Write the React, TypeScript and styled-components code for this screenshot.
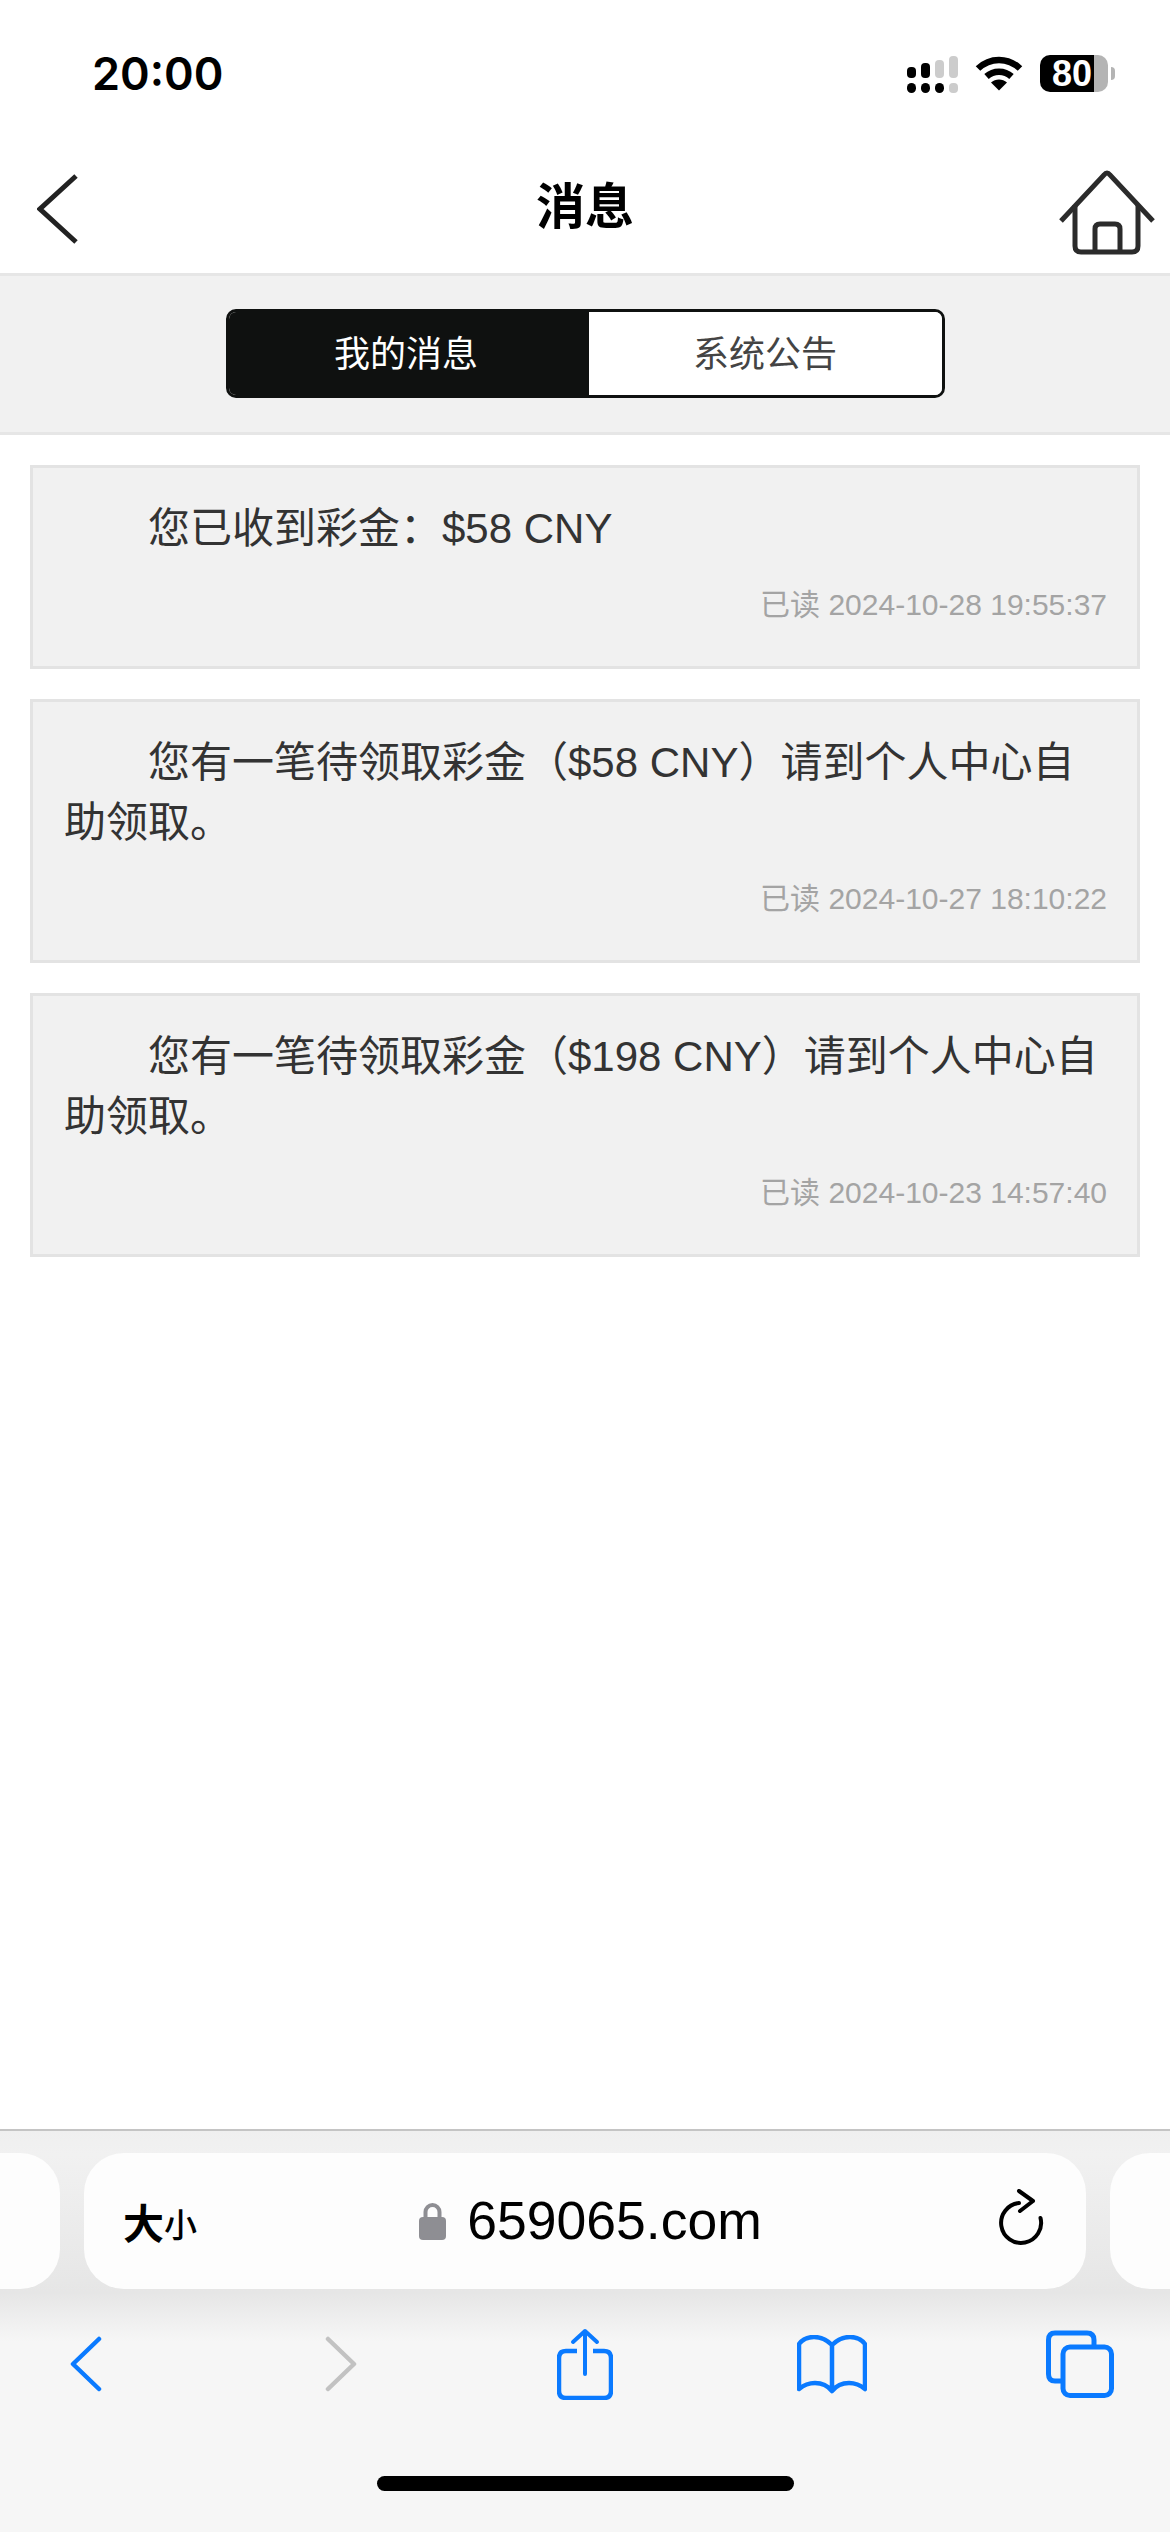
import React from "react";
import styled, { createGlobalStyle } from "styled-components";

const GlobalStyle = createGlobalStyle`
  html, body {
    margin: 0;
    padding: 0;
    background: #fff;
  }
  body {
    font-family: "Liberation Sans", "Noto Sans CJK SC", sans-serif;
  }
  * {
    box-sizing: border-box;
  }
`;

const Screen = styled.div`
  width: 1170px;
  height: 2532px;
  display: flex;
  flex-direction: column;
  overflow: hidden;
  background: #fff;
`;

const StatusBar = styled.div`
  height: 110px;
  flex: none;
  display: flex;
  align-items: flex-start;
  justify-content: space-between;
  padding: 50px 55px 0 92px;
`;

const Clock = styled.div`
  font-family: Inter, "Liberation Sans", sans-serif;
  font-size: 45px;
  line-height: 48px;
  font-weight: 600;
  color: #000;
`;

const StatusIcons = styled.div`
  display: flex;
  align-items: flex-start;
  margin-top: 5px;
`;

const SignalIcon = styled.svg`
  width: 51px;
  height: 37px;
  margin-top: 1px;
`;

const WifiIcon = styled.svg`
  width: 48px;
  height: 36px;
  margin-left: 17px;
`;

const Battery = styled.div`
  width: 68px;
  height: 37px;
  margin-left: 17px;
  border-radius: 10px;
  background: linear-gradient(90deg, #000 0 54px, #b4b4b4 54px);
  color: #fff;
  font-size: 36px;
  font-weight: 700;
  line-height: 37px;
  padding-left: 12px;
`;

const BatteryNub = styled.div`
  width: 4px;
  height: 13px;
  margin: 12px 0 0 3px;
  border-radius: 0 4px 4px 0;
  background: #b4b4b4;
`;

const NavBar = styled.div`
  height: 166px;
  flex: none;
  display: grid;
  grid-template-columns: 1fr auto 1fr;
  align-items: center;
  padding: 32px 15px 0;
  border-bottom: 3px solid #e6e6e6;
`;

const Title = styled.div`
  font-size: 49px;
  line-height: 60px;
  font-weight: 700;
  color: #000;
  margin-top: -2px;
`;

const BackIcon = styled.svg`
  width: 42px;
  height: 72px;
  margin: 2px 0 0 22px;
`;

const HomeIcon = styled.svg`
  width: 96px;
  height: 86px;
  justify-self: end;
  margin-top: 8px;
`;

const TabBand = styled.div`
  height: 159px;
  flex: none;
  display: flex;
  justify-content: center;
  align-items: flex-start;
  padding-top: 33px;
  background: #f1f1f1;
  border-bottom: 3px solid #e6e6e6;
`;

const Segment = styled.div`
  width: 719px;
  height: 89px;
  display: grid;
  grid-template-columns: 360px 1fr;
  border: 3px solid #0f1110;
  border-radius: 10px;
  overflow: hidden;
  background: #fff;
`;

const SegmentItem = styled.div<{ $active?: boolean }>`
  display: flex;
  align-items: center;
  justify-content: center;
  font-size: 36px;
  padding: ${(p) => (p.$active ? "0 5px 5px 0" : "0 0 5px")};
  background: ${(p) => (p.$active ? "#0f1110" : "#fff")};
  color: ${(p) => (p.$active ? "#fff" : "#444")};
`;

const MessageList = styled.div`
  flex: 1;
  display: flex;
  flex-direction: column;
  gap: 30px;
  padding: 30px 30px 0;
`;

const Card = styled.div`
  background: #f1f1f1;
  border: 3px solid #e3e3e3;
  padding: 31px 30px 41px 31px;
`;

const CardText = styled.div`
  font-size: 42px;
  line-height: 60px;
  text-indent: 84px;
  color: #333;
`;

const CardMeta = styled.div`
  margin-top: 26px;
  font-size: 30px;
  line-height: 40px;
  text-align: right;
  color: #a4a4a4;
`;

const BrowserBar = styled.div`
  flex: none;
  height: 403px;
  display: flex;
  flex-direction: column;
  background: linear-gradient(180deg, #efefef 0, #f1f1f1 24px, #e6e6e6 162px, #f6f6f6 210px);
  border-top: 2px solid #c4c4c4;
`;

const AddressRow = styled.div`
  height: 136px;
  flex: none;
  margin-top: 22px;
  display: grid;
  grid-template-columns: 60px 1002px 60px;
  justify-content: space-between;
`;

const SidePill = styled.div<{ $side: "left" | "right" }>`
  background: #fdfdfd;
  border-radius: ${(p) => (p.$side === "left" ? "0 40px 40px 0" : "40px 0 0 40px")};
`;

const AddressPill = styled.div`
  background: #fdfdfd;
  border-radius: 40px;
  display: grid;
  grid-template-columns: 1fr auto 1fr;
  align-items: center;
  padding: 0 42px 0 39px;
  color: #000;
`;

const TextSize = styled.div`
  display: flex;
  align-items: flex-end;
  font-family: "Noto Sans CJK SC", sans-serif;
  font-weight: 700;
  font-size: 41px;
  line-height: 48px;
`;

const TextSizeSmall = styled.span`
  font-size: 33px;
  line-height: 44px;
  font-weight: 500;
`;

const Domain = styled.div`
  display: flex;
  align-items: center;
  gap: 21px;
  margin-left: 14px;
  font-size: 53.5px;
  line-height: 60px;
`;

const LockIcon = styled.svg`
  width: 27px;
  height: 38px;
`;

const ReloadIcon = styled.svg`
  width: 46px;
  height: 56px;
  justify-self: end;
  margin-top: -8px;
`;

const Toolbar = styled.div`
  display: grid;
  grid-template-columns: 172px 338px 150px 344px 152px;
  align-items: center;
  justify-items: center;
  height: 120px;
  margin-top: 15px;
`;

const ToolIcon = styled.svg`
  display: block;
`;

const HomeIndicator = styled.div`
  width: 417px;
  height: 15px;
  margin: 52px auto 0 377px;
  border-radius: 8px;
  background: #000;
`;

const messages = [
  { text: "您已收到彩金：$58 CNY", time: "已读 2024-10-28 19:55:37" },
  { text: "您有一笔待领取彩金（$58 CNY）请到个人中心自助领取。", time: "已读 2024-10-27 18:10:22" },
  { text: "您有一笔待领取彩金（$198 CNY）请到个人中心自助领取。", time: "已读 2024-10-23 14:57:40" },
];

const blue = "#0a7aff";

export default function App() {
  return (
    <Screen>
      <GlobalStyle />
      <StatusBar>
        <Clock>20:00</Clock>
        <StatusIcons>
          <SignalIcon viewBox="0 0 51 37">
            <rect x="0" y="11" width="9" height="11" rx="4" fill="#000" />
            <rect x="14" y="7" width="9" height="15" rx="4" fill="#000" />
            <rect x="28" y="4" width="9" height="18" rx="4" fill="#ccc" />
            <rect x="42" y="0" width="9" height="22" rx="4" fill="#ccc" />
            <rect x="0" y="27" width="9" height="10" rx="4.5" fill="#000" />
            <rect x="14" y="27" width="9" height="10" rx="4.5" fill="#000" />
            <rect x="28" y="27" width="9" height="10" rx="4.5" fill="#000" />
            <rect x="42" y="27" width="9" height="10" rx="4" fill="#ccc" />
          </SignalIcon>
          <WifiIcon viewBox="0 0 48 36">
            <path d="M3 13.5C15 2 33 2 45 13.5" fill="none" stroke="#000" strokeWidth="6.5" />
            <path d="M11.5 21.5C18.5 15 29.5 15 36.5 21.5" fill="none" stroke="#000" strokeWidth="6.5" />
            <path d="M16 27.5C20.5 23.5 27.5 23.5 32 27.5L24 35.5Z" fill="#000" />
          </WifiIcon>
          <Battery>80</Battery>
          <BatteryNub />
        </StatusIcons>
      </StatusBar>

      <NavBar>
        <BackIcon viewBox="0 0 42 72">
          <path d="M39 3L3 36L39 69" fill="none" stroke="#222" strokeWidth="5" />
        </BackIcon>
        <Title>消息</Title>
        <HomeIcon viewBox="0 0 96 86">
          <path d="M2 52L45 6Q48 2 51 6L94 52" fill="none" stroke="#2b2b2b" strokeWidth="5" />
          <path d="M16 36V77Q16 83 22 83H73Q79 83 79 77V36" fill="none" stroke="#2b2b2b" strokeWidth="5" />
          <path d="M36 83V60Q36 55 41 55H56Q61 55 61 60V83" fill="none" stroke="#2b2b2b" strokeWidth="5" />
        </HomeIcon>
      </NavBar>

      <TabBand>
        <Segment>
          <SegmentItem $active>我的消息</SegmentItem>
          <SegmentItem>系统公告</SegmentItem>
        </Segment>
      </TabBand>

      <MessageList>
        {messages.map((m) => (
          <Card key={m.time}>
            <CardText>{m.text}</CardText>
            <CardMeta>{m.time}</CardMeta>
          </Card>
        ))}
      </MessageList>

      <BrowserBar>
        <AddressRow>
          <SidePill $side="left" />
          <AddressPill>
            <TextSize>
              大<TextSizeSmall>小</TextSizeSmall>
            </TextSize>
            <Domain>
              <LockIcon viewBox="0 0 27 38">
                <path d="M6.500 17V10a7 7 0 0 1 14 0v7" fill="none" stroke="#8e8e93" strokeWidth="4" />
                <rect x="0" y="15" width="27" height="23" rx="4" fill="#8e8e93" />
              </LockIcon>
              659065.com
            </Domain>
            <ReloadIcon viewBox="0 0 46 56">
              <path d="M21 14A20 20 0 1 0 42.500 29" fill="none" stroke="#000" strokeWidth="4" strokeLinecap="round" />
              <path d="M21 2L35 12L22 22" fill="none" stroke="#000" strokeWidth="4" strokeLinecap="round" strokeLinejoin="round" />
            </ReloadIcon>
          </AddressPill>
          <SidePill $side="right" />
        </AddressRow>

        <Toolbar>
          <ToolIcon width="32" height="56" viewBox="0 0 32 56">
            <path d="M29 3L3 28L29 53" fill="none" stroke={blue} strokeWidth="4.500" strokeLinecap="round" strokeLinejoin="round" />
          </ToolIcon>
          <ToolIcon width="32" height="56" viewBox="0 0 32 56">
            <path d="M3 3L29 28L3 53" fill="none" stroke="#c2c2c2" strokeWidth="4.500" strokeLinecap="round" strokeLinejoin="round" />
          </ToolIcon>
          <ToolIcon width="56" height="72" viewBox="0 0 56 72">
            <path d="M20 23H9Q2 23 2 30V63Q2 70 9 70H47Q54 70 54 63V30Q54 23 47 23H36" fill="none" stroke={blue} strokeWidth="4.500" />
            <path d="M28 46V3M16 14L28 3L40 14" fill="none" stroke={blue} strokeWidth="4" strokeLinecap="round" strokeLinejoin="round" />
          </ToolIcon>
          <ToolIcon width="70" height="59" viewBox="0 0 70 59">
            <path d="M35 10C29 4 23 2 17 2C10 2 5 5 2 9V54C8 49 13 48 18 48C25 48 31 51 35 56C39 51 45 48 52 48C57 48 62 49 68 54V9C65 5 60 2 53 2C47 2 41 4 35 10ZM35 10V56" fill="none" stroke={blue} strokeWidth="4.500" strokeLinejoin="round" />
          </ToolIcon>
          <ToolIcon width="68" height="68" viewBox="0 0 68 68">
            <path d="M15 51H9Q2.500 51 2.500 44V10Q2.500 3 9 3H41Q48 3 48 10V17" fill="none" stroke={blue} strokeWidth="5" />
            <rect x="17" y="17" width="48.500" height="48.500" rx="7" fill="none" stroke={blue} strokeWidth="5" />
          </ToolIcon>
        </Toolbar>
        <HomeIndicator />
      </BrowserBar>
    </Screen>
  );
}
